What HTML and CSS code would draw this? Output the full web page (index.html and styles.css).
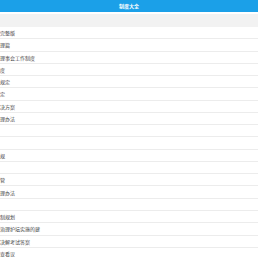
FILE: index.html
```html
<!DOCTYPE html>
<html lang="zh">
<head>
<meta charset="utf-8">
<link rel="stylesheet" href="styles.css">
</head>
<body>
<header class="topbar"><span class="title">制度大全</span></header>
<div class="band"></div>
<ul class="list">
  <li class="row">完整版</li>
  <li class="row">理篇</li>
  <li class="row">理事会工作制度</li>
  <li class="row">度</li>
  <li class="row">规定</li>
  <li class="row">定</li>
  <li class="row">决方案</li>
  <li class="row">理办法</li>
  <li class="row"></li>
  <li class="row"></li>
  <li class="row">规</li>
  <li class="row"></li>
  <li class="row">管</li>
  <li class="row">理办法</li>
  <li class="row"></li>
  <li class="row">制规划</li>
  <li class="row">治理护坛实施的建</li>
  <li class="row">决解考试答案</li>
  <li class="row">查看议</li>
</ul>
</body>
</html>
```
FILE: styles.css
```css
html, body {
  margin: 0;
  padding: 0;
  background: #ffffff;
  overflow: hidden;
}
body {
  font-family: "Noto Sans CJK SC", "Noto Sans", sans-serif;
  width: 258px;
}
.topbar {
  height: 12px;
  background: #1ba0e8;
  display: flex;
  align-items: center;
  justify-content: center;
}
.title {
  color: #ffffff;
  font-size: 5px;
  font-weight: bold;
  line-height: 12px;
}
.band {
  margin-top: 2px;
  height: 13px;
  background: #f2f2f2;
}
.list {
  list-style: none;
  margin: 0;
  padding: 0;
}
.row {
  height: 11.28px;
  border-bottom: 1px solid #ececec;
  display: flex;
  align-items: center;
  font-size: 5px;
  color: #444444;
  white-space: nowrap;
  overflow: hidden;
}
```
